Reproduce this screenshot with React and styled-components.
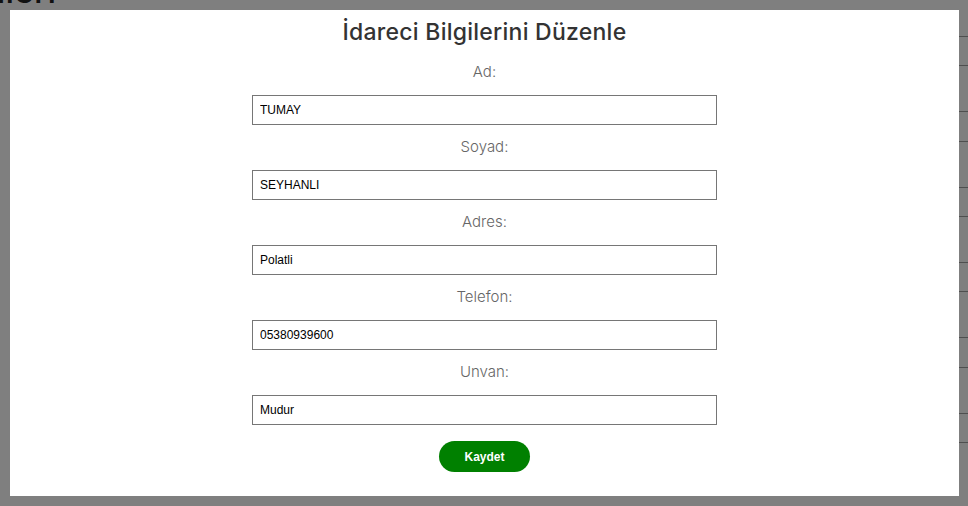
import styled, { createGlobalStyle } from "styled-components";

const GlobalStyle = createGlobalStyle`
  html, body {
    margin: 0;
    padding: 0;
    background: #fff;
    overflow: hidden;
  }
  * { box-sizing: border-box; }
`;

const FIELDS = [
  { label: "Ad:", value: "TUMAY" },
  { label: "Soyad:", value: "SEYHANLI" },
  { label: "Adres:", value: "Polatli" },
  { label: "Telefon:", value: "05380939600" },
  { label: "Unvan:", value: "Mudur" },
];

// arka plandaki tablo satirlari
const ROWS = [29, 46, 30, 46, 29, 46, 29, 46, 30, 46, 29, 46];

const App = () => {
  return (
    <>
      <GlobalStyle />
      <Page>
        <PageTitle>İdareci Bilgileri</PageTitle>
        <Table>
          {ROWS.map((h, i) => (
            <Row key={i} tall={h} />
          ))}
        </Table>
      </Page>
      <Overlay>
        <Modal>
          <Title>İdareci Bilgilerini Düzenle</Title>
          <Form>
            {FIELDS.map((f) => (
              <Field key={f.label}>
                <Label>{f.label}</Label>
                <Input defaultValue={f.value} />
              </Field>
            ))}
            <SaveButton type="button">Kaydet</SaveButton>
          </Form>
        </Modal>
      </Overlay>
    </>
  );
};
export default App;

const Page = styled.div`
  width: 968px;
  height: 506px;
  overflow: hidden;
`;

const PageTitle = styled.h1`
  margin: -27px 0 0 -183px;
  height: 35px;
  font-family: Inter, "Liberation Sans", sans-serif;
  font-size: 34px;
  font-weight: 500;
  line-height: 35px;
  color: #222;
  white-space: nowrap;
`;

const Table = styled.div`
  margin: 28px 0 0 120px;
  display: flex;
  flex-direction: column;
`;

const Row = styled.div`
  height: ${({ tall }) => tall}px;
  border-top: 1px solid #9e9e9e;
`;

const Overlay = styled.div`
  position: fixed;
  inset: 0;
  background: rgba(0, 0, 0, 0.5);
  padding: 10px 9px 10px 10px;
`;

const Modal = styled.div`
  width: 949px;
  height: 486px;
  background: #fff;
  display: flex;
  flex-direction: column;
  align-items: center;
  padding-top: 4px;
`;

const Title = styled.h2`
  margin: 0;
  height: 36px;
  line-height: 36px;
  font-family: Inter, "Liberation Sans", sans-serif;
  font-size: 23px;
  font-weight: 500;
  letter-spacing: 0.25px;
  color: #333;
`;

const Form = styled.div`
  display: flex;
  flex-direction: column;
  align-items: center;
`;

const Field = styled.div`
  display: flex;
  flex-direction: column;
  align-items: center;
  padding-top: 12px;
  gap: 13px;
`;

const Label = styled.div`
  height: 20px;
  line-height: 20px;
  font-family: Inter, "Liberation Sans", sans-serif;
  font-size: 15px;
  font-weight: 300;
  color: #666;
`;

const Input = styled.input`
  width: 465px;
  height: 30px;
  border: 1px solid #767676;
  padding: 0 7px;
  font-family: Arial, "Liberation Sans", sans-serif;
  font-size: 12px;
  color: #000;
  outline: none;
`;

const SaveButton = styled.button`
  margin-top: 16px;
  width: 91px;
  height: 31px;
  border: none;
  border-radius: 16px;
  background: #008000;
  color: #fff;
  font-family: Arial, "Liberation Sans", sans-serif;
  font-size: 12px;
  font-weight: 700;
  cursor: pointer;
`;
